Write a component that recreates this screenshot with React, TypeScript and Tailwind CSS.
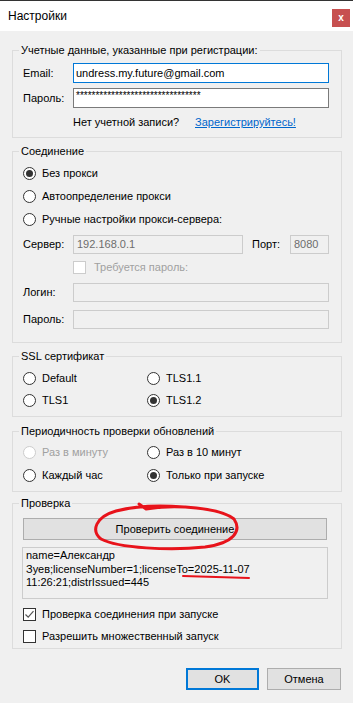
import React from "react";

const Radio = ({ checked = false, disabled = false }: { checked?: boolean; disabled?: boolean }) => (
  <span
    className={
      disabled
        ? "w-[13px] h-[13px] shrink-0 rounded-full border border-[#cccccc] bg-white flex items-center justify-center"
        : "w-[13px] h-[13px] shrink-0 rounded-full border border-[#333333] bg-white flex items-center justify-center"
    }
  >
    {checked && <span className="w-[7px] h-[7px] rounded-full bg-[#333333]" />}
  </span>
);

const Check = ({ checked = false, disabled = false }: { checked?: boolean; disabled?: boolean }) => (
  <span
    className={
      disabled
        ? "w-[13px] h-[13px] shrink-0 border border-[#cccccc] bg-white flex items-center justify-center"
        : "w-[13px] h-[13px] shrink-0 border border-[#333333] bg-white flex items-center justify-center"
    }
  >
    {checked && (
      <svg width="11" height="11" viewBox="0 0 11 11">
        <path d="M1.5 5.5 L4.2 8.2 L9.5 2.2" fill="none" stroke="#555555" strokeWidth="1.2" />
      </svg>
    )}
  </span>
);

const RadioItem = ({ label, checked, disabled }: { label: string; checked?: boolean; disabled?: boolean }) => (
  <div className="w-[124px] flex items-center gap-[6px]">
    <Radio checked={checked} disabled={disabled} />
    <span className={disabled ? "text-[#a0a0a0] whitespace-nowrap" : "whitespace-nowrap"}>{label}</span>
  </div>
);

export default function App() {
  return (
    <div className="relative w-[353px] h-[703px] bg-[#f0f0f0] flex flex-col text-[11px] leading-[13px] text-black font-['Liberation_Sans',Arial,sans-serif] overflow-hidden">
      {/* Title bar */}
      <div className="h-[31px] bg-white border-t border-[#333333] flex items-start">
        <span className="ml-[8px] mt-[8px] text-[12px] leading-[15px]">Настройки</span>
        <div className="ml-auto mr-[3px] mt-[8px] w-[18px] h-[18px] bg-[#c75050] flex items-center justify-center">
          <span className="text-white font-bold text-[10px] leading-[10px] -mt-[1px]">x</span>
        </div>
      </div>

      {/* Group 1 */}
      <fieldset className="mt-[13px] ml-[12px] w-[330px] border border-[#dcdcdc]">
        <legend className="ml-[6px] px-[2px] leading-[13px]">Учетные данные, указанные при регистрации:</legend>
        <div className="pt-[6px] pb-[8px]">
          <div className="flex items-center h-[20px]">
            <span className="pl-[10px] w-[60px]">Email:</span>
            <div className="w-[256px] h-[20px] border border-[#0078d7] bg-white pl-[2px] flex items-center">
              undress.my.future@gmail.com
            </div>
          </div>
          <div className="flex items-center h-[20px] mt-[5px]">
            <span className="pl-[10px] w-[60px]">Пароль:</span>
            <div className="w-[256px] h-[20px] border border-[#7a7a7a] bg-white pl-[2px] flex items-start pt-[2px] text-[10px] leading-[10px]">
              ********************************
            </div>
          </div>
          <div className="flex mt-[8px] pl-[60px]">
            <span className="w-[122px]">Нет учетной записи?</span>
            <span className="text-[#0066cc] underline">Зарегистрируйтесь!</span>
          </div>
        </div>
      </fieldset>

      {/* Group 2 */}
      <fieldset className="mt-[7px] ml-[12px] w-[330px] border border-[#dcdcdc]">
        <legend className="ml-[6px] px-[2px] leading-[13px]">Соединение</legend>
        <div className="pt-[4px] pb-[13px]">
          <div className="h-[23px] pl-[10px] flex items-center">
            <RadioItem label="Без прокси" checked />
          </div>
          <div className="h-[23px] pl-[10px] flex items-center">
            <RadioItem label="Автоопределение прокси" />
          </div>
          <div className="h-[23px] pl-[10px] flex items-center">
            <RadioItem label="Ручные настройки прокси-сервера:" />
          </div>
          <div className="mt-[4px] h-[19px] flex items-center">
            <span className="pl-[10px] w-[60px]">Сервер:</span>
            <div className="w-[170px] h-[19px] border border-[#cccccc] bg-[#f0f0f0] pl-[3px] flex items-center text-[#6d6d6d]">
              192.168.0.1
            </div>
            <span className="ml-[9px] w-[38px]">Порт:</span>
            <div className="w-[39px] h-[19px] border border-[#cccccc] bg-[#f0f0f0] pl-[3px] flex items-center text-[#6d6d6d]">
              8080
            </div>
          </div>
          <div className="mt-[7px] h-[13px] pl-[60px] flex items-center gap-[8px]">
            <Check disabled />
            <span className="text-[#a0a0a0]">Требуется пароль:</span>
          </div>
          <div className="mt-[9px] h-[19px] flex items-center">
            <span className="pl-[10px] w-[60px]">Логин:</span>
            <div className="w-[256px] h-[19px] border border-[#cccccc] bg-[#f0f0f0]" />
          </div>
          <div className="mt-[8px] h-[19px] flex items-center">
            <span className="pl-[10px] w-[60px]">Пароль:</span>
            <div className="w-[256px] h-[19px] border border-[#cccccc] bg-[#f0f0f0]" />
          </div>
        </div>
      </fieldset>

      {/* Group 3 */}
      <fieldset className="mt-[7px] ml-[12px] w-[330px] border border-[#dcdcdc]">
        <legend className="ml-[6px] px-[2px] leading-[13px]">SSL сертификат</legend>
        <div className="pt-[4px] pb-[5px]">
          <div className="h-[22px] pl-[10px] flex items-center">
            <RadioItem label="Default" />
            <RadioItem label="TLS1.1" />
          </div>
          <div className="h-[22px] pl-[10px] flex items-center">
            <RadioItem label="TLS1" />
            <RadioItem label="TLS1.2" checked />
          </div>
        </div>
      </fieldset>

      {/* Group 4 */}
      <fieldset className="mt-[8px] ml-[12px] w-[330px] border border-[#dcdcdc]">
        <legend className="ml-[6px] px-[2px] leading-[13px]">Периодичность проверки обновлений</legend>
        <div className="pt-[3px] pb-[4px]">
          <div className="h-[23px] pl-[10px] flex items-center">
            <RadioItem label="Раз в минуту" disabled />
            <RadioItem label="Раз в 10 минут" />
          </div>
          <div className="h-[23px] pl-[10px] flex items-center">
            <RadioItem label="Каждый час" />
            <RadioItem label="Только при запуске" checked />
          </div>
        </div>
      </fieldset>

      {/* Group 5 */}
      <fieldset className="mt-[5px] ml-[12px] w-[330px] border border-[#dcdcdc]">
        <legend className="ml-[6px] px-[2px] leading-[13px]">Проверка</legend>
        <div className="pt-[8px] pb-[1px]">
          <div className="ml-[10px] w-[304px] h-[22px] border border-[#adadad] bg-[#e1e1e1] flex items-center justify-center">
            Проверить соединение
          </div>
          <div className="mt-[7px] ml-[9px] w-[306px] h-[52px] border border-[#cccccc] bg-[#f0f0f0] pl-[3px] pt-[1px] leading-[13.5px]">
            <div>name=Александр</div>
            <div>Зуев;licenseNumber=1;licenseTo=2025-11-07</div>
            <div>11:26:21;distrIssued=445</div>
          </div>
          <div className="mt-[4px] h-[22px] pl-[10px] flex items-center gap-[6px]">
            <Check checked />
            <span>Проверка соединения при запуске</span>
          </div>
          <div className="h-[22px] pl-[10px] flex items-center gap-[6px]">
            <Check />
            <span>Разрешить множественный запуск</span>
          </div>
        </div>
      </fieldset>

      {/* Buttons */}
      <div className="mt-[19px] flex justify-end pr-[12px] gap-[8px]">
        <div className="w-[73px] h-[22px] border-2 border-[#0078d7] bg-[#e1e1e1] flex items-center justify-center">OK</div>
        <div className="w-[74px] h-[22px] border border-[#adadad] bg-[#e1e1e1] flex items-center justify-center">Отмена</div>
      </div>

      {/* Red annotations */}
      <svg className="absolute left-0 top-0 pointer-events-none" width="353" height="703" viewBox="0 0 353 703">
        <path
          d="M 139 504 L 146 509 C 177 504, 220 508, 234 519 C 242 531, 234 543, 205 547 C 170 551, 118 548, 101 539 C 91 531, 95 517, 116 511 C 135 506, 160 505, 184 507"
          fill="none"
          stroke="#e8131b"
          strokeWidth="3"
          strokeLinecap="round"
        />
        <path d="M 183 576 L 249 578" fill="none" stroke="#e8131b" strokeWidth="2" strokeLinecap="round" />
      </svg>
    </div>
  );
}
